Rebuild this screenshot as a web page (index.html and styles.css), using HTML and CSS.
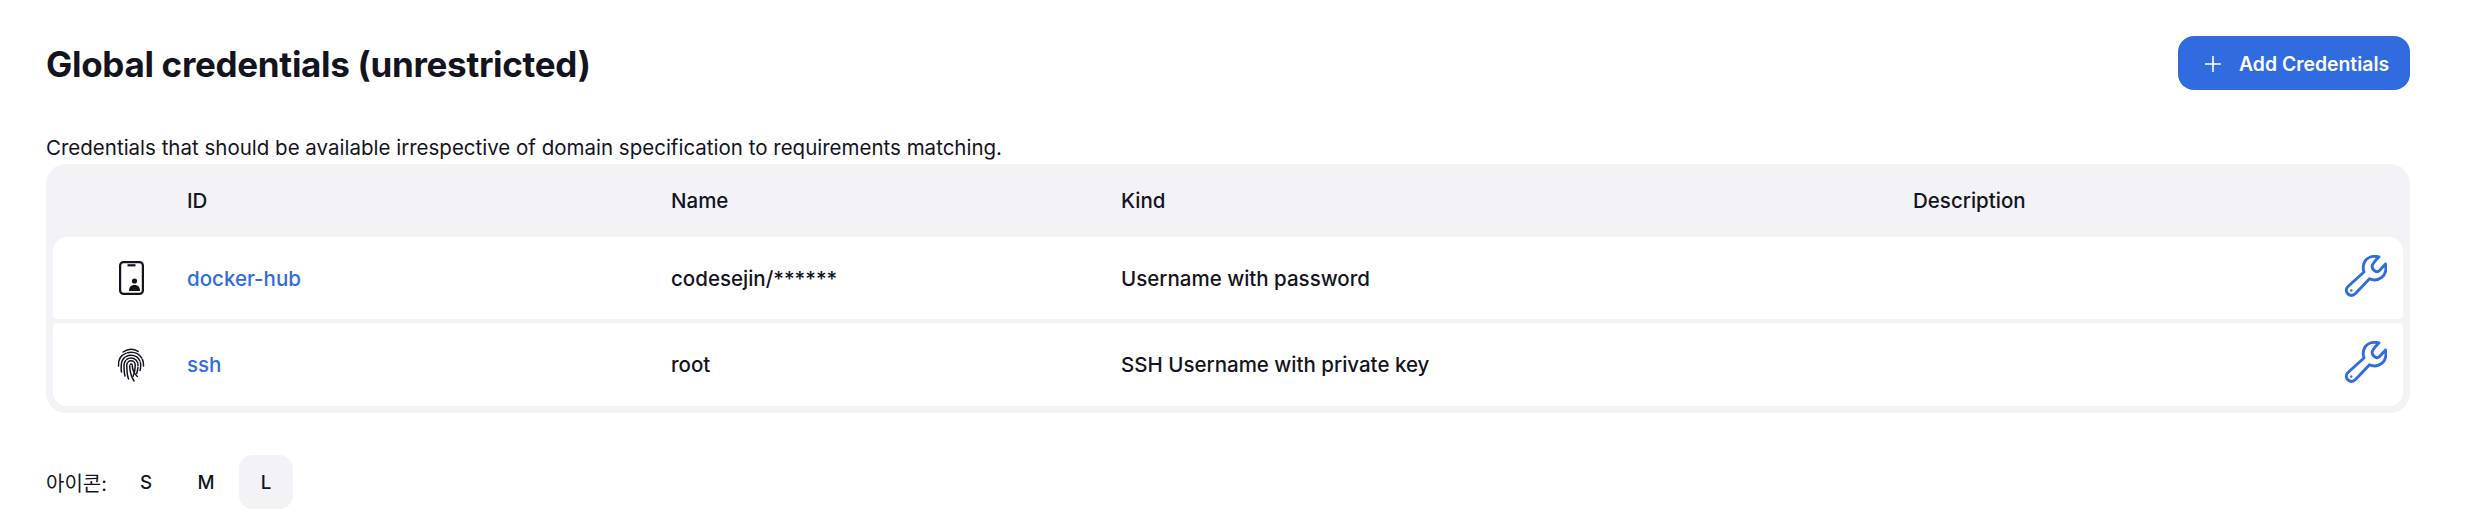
FILE: index.html
```html
<!DOCTYPE html>
<html lang="en">
<head>
<meta charset="UTF-8" />
<title>Global credentials (unrestricted)</title>
<link rel="stylesheet" href="styles.css">
</head>
<body>

  <!-- Header -->
  <div class="page-head">
    <h1>Global credentials (unrestricted)</h1>
    <a class="add-btn" href="#">
      <svg class="plus-icon" viewBox="0 0 18 18"><path d="M9 1v16M1 9h16" /></svg>
      Add Credentials
    </a>
  </div>

  <p class="intro">Credentials that should be available irrespective of domain specification to requirements matching.</p>

  <!-- Credentials table -->
  <div class="cred-table">
    <div class="cred-row cred-head">
      <div></div>
      <div>ID</div>
      <div>Name</div>
      <div>Kind</div>
      <div>Description</div>
      <div></div>
    </div>

    <div class="cred-row cred-item">
      <div class="type-cell">
        <svg class="type-icon" viewBox="0 0 25 34">
          <rect x="1.100" y="1.100" width="22.800" height="31.800" rx="3.500" class="line" />
          <path d="M8.500 4.300h8" class="line" />
          <circle cx="15.500" cy="20" r="2.600" class="fill" />
          <path d="M10 30c0-4 2-6 5.500-6s5.500 2 5.500 6z" class="fill" />
        </svg>
      </div>
      <div><a href="#">docker-hub</a></div>
      <div>codesejin/******</div>
      <div>Username with password</div>
      <div></div>
      <div class="tool-cell">
        <svg class="wrench" viewBox="0 0 42 42"><use href="#wrench-shape" /></svg>
      </div>
    </div>

    <div class="cred-row cred-item">
      <div class="type-cell">
        <svg class="type-icon print" viewBox="0 0 28 34">
          <g class="thin">
            <path d="M6 4C11 .6 17 .6 22 4" />
            <path d="M1.500 18C1 10 6.500 4.300 14 4.300S27 10 26.500 18" />
            <path d="M4.500 24C3.800 22 4.300 19 4.300 17 4.300 11.500 8.500 7.200 14 7.200S23.700 11.500 23.700 17c0 2-.2 4-.7 5.500" />
            <path d="M8 28c-1-3-1-7-1-11 0-3.800 3-7 7-7s7 3.200 7 7c0 3-.5 6-1.300 8.500" />
            <path d="M11.500 31C10 27 9.800 21 9.800 17c0-2.300 1.900-4.200 4.200-4.200s4.200 1.900 4.200 4.200c0 4-.7 8-2.200 11.500" />
            <path d="M17 33c-2.500-4-4.300-10-4.300-15.500 0-.8.500-1.400 1.300-1.400s1.300.6 1.300 1.400c0 4 2 8 5 11" />
          </g>
        </svg>
      </div>
      <div><a href="#">ssh</a></div>
      <div>root</div>
      <div>SSH Username with private key</div>
      <div></div>
      <div class="tool-cell">
        <svg class="wrench" viewBox="0 0 42 42"><use href="#wrench-shape" /></svg>
      </div>
    </div>
  </div>

  <!-- Icon size switch -->
  <div class="size-bar">
    <span class="size-label">아이콘:</span>
    <a class="size-opt" href="#">S</a>
    <a class="size-opt" href="#">M</a>
    <a class="size-opt active" href="#">L</a>
  </div>

  <svg class="defs" width="0" height="0">
    <symbol id="wrench-shape" viewBox="0 0 42 42">
      <path d="M34 1.800C28 .5 22 2 19.500 7 18 10 18 14 19 17L3 31.500C.5 34 1 37 3 39c2.500 2 5.500 1.500 7.500-.5l14-14.700c3.500 1.700 8.500 1.200 12-1.300 4-3 5-8.500 4-13.500l-6 6.500c-1.500 1.500-3 1.500-4.500.5-2-1.300-3.300-3-2.700-5.500.5-2 2.700-4.500 6.700-8.700z" fill="none" stroke="#306cdf" stroke-width="2.900" stroke-linejoin="round" />
      <circle cx="6.300" cy="35.500" r="1.200" fill="#306cdf" />
    </symbol>
  </svg>

</body>
</html>
```

FILE: styles.css
```css
/* Page */
body {
  margin: 0;
  padding: 36px 78px 21px 46px;
  font-family: Inter, "Noto Sans CJK KR", sans-serif;
  font-size: 20.5px;
  color: #14141f;
  background: #fff;
}
a {
  text-decoration: none;
}

/* Header */
.page-head {
  display: flex;
  align-items: center;
  justify-content: space-between;
  height: 54px;
}
h1 {
  margin: 0;
  padding-top: 2px;
  font-size: 35px;
  font-weight: 700;
  letter-spacing: -0.3px;
}
.add-btn {
  display: flex;
  align-items: center;
  gap: 17px;
  box-sizing: border-box;
  width: 232px;
  height: 54px;
  padding: 2px 0 0 26px;
  border-radius: 16px;
  background: #306cdf;
  color: #fff;
  font-size: 19.4px;
  font-weight: 600;
}
.plus-icon {
  width: 18px;
  height: 18px;
  fill: none;
  stroke: #fff;
  stroke-width: 1.6;
}

.intro {
  margin: 43px 0 0;
  padding-bottom: 2px;
  line-height: 29px;
}

/* Credentials table */
.cred-table {
  background: #f2f2f7;
  border-radius: 20px;
  padding: 0 7px 7px;
}
.cred-row {
  display: grid;
  grid-template-columns: 134px 484px 450px 792px 1fr 58px;
  align-items: center;
  font-weight: 500;
}
.cred-head {
  height: 73px;
}
.cred-item {
  height: 82px;
  background: #fff;
  margin-bottom: 4px;
  border-radius: 4px;
}
.cred-item:nth-child(2) {
  border-radius: 14px 14px 4px 4px;
}
.cred-item:last-child {
  margin-bottom: 0;
  height: 83px;
  border-radius: 4px 4px 14px 14px;
}
.cred-item a {
  color: #306cdf;
}
.type-cell {
  display: flex;
  justify-content: center;
  padding-left: 22px;
}
.type-icon {
  width: 25px;
  height: 34px;
}
.type-icon .line {
  fill: none;
  stroke: #14141f;
  stroke-width: 2.200;
}
.type-icon .fill {
  fill: #14141f;
}
.type-icon.print {
  width: 28px;
  height: 34px;
}
.type-icon .thin {
  fill: none;
  stroke: #14141f;
  stroke-width: 1.500;
  stroke-linecap: round;
  stroke-dasharray: 16 1.500;
}
.tool-cell {
  display: flex;
  padding-bottom: 5px;
}
.wrench {
  width: 42px;
  height: 42px;
}
.defs {
  position: absolute;
}

/* Icon size switch */
.size-bar {
  display: flex;
  align-items: center;
  margin-top: 42px;
  height: 54px;
}
.size-label {
  width: 73px;
  font-size: 20px;
}
.size-opt {
  display: flex;
  align-items: center;
  justify-content: center;
  width: 54px;
  height: 54px;
  margin-right: 6px;
  border-radius: 14px;
  color: #14141f;
  font-size: 18.700px;
  font-weight: 500;
}
.size-opt.active {
  background: #f2f2f7;
}
```
